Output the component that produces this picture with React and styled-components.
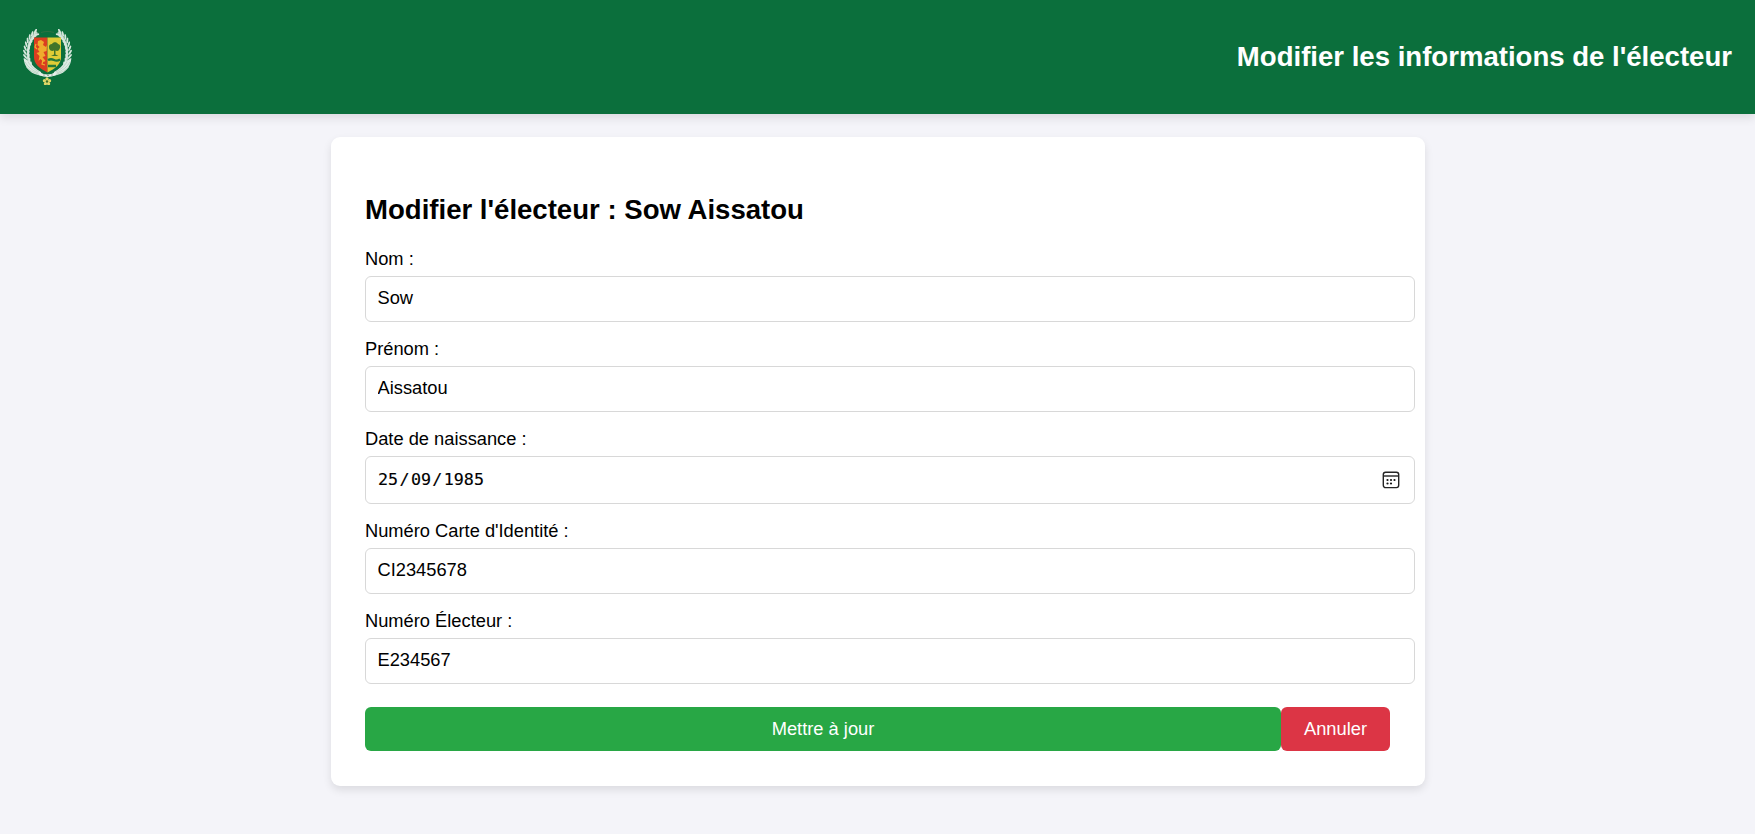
import React from 'react';
import styled, { createGlobalStyle } from 'styled-components';

const GlobalStyle = createGlobalStyle`
  * { box-sizing: border-box; }
  body {
    margin: 0;
    min-height: 100vh;
    background: #f4f4f9;
    color: #000;
    font-family: "Liberation Sans", Arial, sans-serif;
    font-size: 18.3px;
    overflow: hidden;
  }
`;

const Header = styled.header`
  display: flex;
  align-items: center;
  justify-content: space-between;
  height: 114px;
  padding: 0 23px;
  background: #0b6f3c;
  color: #fff;
  box-shadow: 0 4px 9px rgba(0, 0, 0, 0.1);
`;

const Logo = styled.svg`
  display: block;
  width: 49px;
  height: 56px;
`;

const HeaderTitle = styled.h1`
  margin: 0;
  font-size: 27.57px;
  line-height: 32px;
`;

const Card = styled.main`
  width: 1094px;
  height: 649px;
  margin: 23px 0 0 331px;
  padding: 57px 35px 34px 34px;
  background: #fff;
  border-radius: 9px;
  box-shadow: 0 4px 9px rgba(0, 0, 0, 0.1);
`;

const CardTitle = styled.h2`
  margin: 0 0 23px;
  font-size: 27.57px;
  line-height: 32px;
`;

const Form = styled.form`
  display: flex;
  flex-direction: column;
`;

const Field = styled.div`
  display: flex;
  flex-direction: column;
  width: 1050px;
  margin-bottom: 17px;
`;

const Label = styled.label`
  height: 21px;
  margin-bottom: 6px;
  line-height: 20px;
`;

const Input = styled.input`
  height: 46px;
  padding: 0 11.5px 2px;
  border: 1px solid #d8d8d8;
  border-radius: 6px;
  background: #fff;
  color: #000;
  font: inherit;
  outline: none;
`;

const DateBox = styled.div`
  display: flex;
  align-items: center;
  justify-content: space-between;
  height: 48px;
  padding: 0 14px 0 12px;
  border: 1px solid #d8d8d8;
  border-radius: 6px;
  background: #fff;
`;

const DateValue = styled.div`
  display: flex;
  padding-bottom: 2px;
  font-family: "DejaVu Sans Mono", monospace;
  font-size: 16.7px;
  -webkit-text-stroke: 0.15px #000;
`;

const Slash = styled.span`
  width: 12.8px;
  text-align: center;
`;

const Actions = styled.div`
  display: flex;
  margin-top: 6px;
`;

const Button = styled.button`
  flex: ${({ $grow }) => ($grow ? '1' : '0 0 109px')};
  height: 44px;
  padding: 0;
  border: 0;
  border-radius: 6px;
  background: ${({ $color }) => $color};
  color: #fff;
  font: inherit;
`;

const LEAVES = [
  [5, 35, -25], [3.5, 31, -20], [2.800, 27, -14], [2.600, 23, -8], [3, 19, 0],
  [4, 15, 8], [5.500, 11.500, 18], [7.500, 8, 28], [10, 5, 38], [13, 2.800, 52],
];

const Branch = () => (
  <g>
    <path d="M11 43C5 36 4 29 5 21C6 13 9 7 14 3" fill="none" stroke="#bcd5c5" strokeWidth="2.200" />
    {LEAVES.map(([x, y, angle]) => (
      <g key={y} transform={`translate(${x} ${y}) rotate(${angle})`} fill="#d7e7dd">
        <ellipse cx="-.8" rx="1" ry="3" transform="rotate(-24)" />
        <ellipse cx="2.800" rx="1.100" ry="2.800" transform="rotate(26)" />
      </g>
    ))}
    <path d="M.7 29C1 37 6 44 15 46L19 47L18 43C13 40 9 37 7 32L5 33L4 30L3 32Z" fill="#dfebe4" />
    <path d="M2 33Q6 40 15 44M5 33Q8 39 16 43M3 38Q8 43 16 45.500" fill="none" stroke="#a9c9b5" strokeWidth=".6" />
  </g>
);

const CoatOfArms = () => (
  <Logo viewBox="0 0 49 56" aria-label="Armoiries du Sénégal">
    <path d="M18 3.500Q24.500 1.500 31 3.500" fill="none" stroke="#2c7142" strokeWidth="1.100" />
    <Branch />
    <g transform="translate(49 0) scale(-1 1)"><Branch /></g>
    <path d="M11 8.500H24.500V43.500C16 39 11 35 11 28Z" fill="#db3d20" />
    <path d="M24.500 8.500H38V28C38 35 33 39 24.500 43.500Z" fill="#dfcc36" />
    <path d="M15 12l3-1 3 2-1 3 3 2 1-2-.5 6-3 1 2 4-3 1 3 4-2 1-3-3-2 2 1-5-3-3 3-1-2-3 2-2-2-2z" fill="#efab2d" />
    <path d="M13 15l-1 3 2 2M20 31l-1 4 3 1" fill="none" stroke="#efab2d" strokeWidth="1.200" />
    <path d="M26 19c-.5-3 1-4 3-4 1-2.500 5-2.500 6 0 2 0 3 3 1.500 5-.5 2-2.500 2.500-4 1.500v4l3 1.500H28l3-1.500v-4c-2 1-4.500 0-5-2.500z" fill="#42752a" />
    <path d="M25 31q3-1.500 6 0t6-.5M25 37h8" fill="none" stroke="#24783a" strokeWidth="2.300" />
    <path d="M17 43.500Q24.500 47.500 32 43.500L33 46Q24.500 50 16 46Z" fill="#e8f0eb" />
    <path d="M20 46h2m2 .5h2m2-.5h2" stroke="#79917f" strokeWidth=".7" />
    <g transform="translate(24 52.500)">
      <g fill="#dfd768">
        <circle cx="0" cy="-2.700" r="1.600" /><circle cx="2.600" cy="-.8" r="1.600" />
        <circle cx="1.600" cy="2.200" r="1.600" /><circle cx="-1.600" cy="2.200" r="1.600" />
        <circle cx="-2.600" cy="-.8" r="1.600" /><circle r="2.200" />
      </g>
      <circle r="1.200" fill="#3a6f29" />
    </g>
  </Logo>
);

const CalendarIcon = () => (
  <svg width="18" height="18" viewBox="0 0 18 18" aria-hidden="true">
    <rect x="1.300" y="1.200" width="15.400" height="15.400" rx="2.300" fill="none" stroke="#252525" strokeWidth="1.400" />
    <path d="M1.500 5H16.500" stroke="#252525" strokeWidth="1.400" />
    <g fill="#151515">
      <circle cx="5.500" cy="9" r="1.100" /><circle cx="9" cy="9" r="1.100" /><circle cx="12.500" cy="9" r="1.100" />
      <circle cx="5.500" cy="12.500" r="1.100" /><circle cx="9" cy="12.500" r="1.100" />
    </g>
  </svg>
);

const TextField = ({ id, label, value }) => (
  <Field>
    <Label htmlFor={id}>{label}</Label>
    <Input id={id} defaultValue={value} />
  </Field>
);

export default function App() {
  return (
    <>
      <GlobalStyle />
      <Header>
        <CoatOfArms />
        <HeaderTitle>Modifier les informations de l'électeur</HeaderTitle>
      </Header>
      <Card>
        <CardTitle>Modifier l'électeur : Sow Aissatou</CardTitle>
        <Form onSubmit={(event) => event.preventDefault()}>
          <TextField id="nom" label="Nom :" value="Sow" />
          <TextField id="prenom" label="Prénom :" value="Aissatou" />
          <Field>
            <Label>Date de naissance :</Label>
            <DateBox>
              <DateValue>
                <span>25</span><Slash>/</Slash><span>09</span><Slash>/</Slash><span>1985</span>
              </DateValue>
              <CalendarIcon />
            </DateBox>
          </Field>
          <TextField id="carte" label="Numéro Carte d'Identité :" value="CI2345678" />
          <TextField id="numero" label="Numéro Électeur :" value="E234567" />
          <Actions>
            <Button $grow $color="#28a745" type="submit">Mettre à jour</Button>
            <Button $color="#dc3545" type="button">Annuler</Button>
          </Actions>
        </Form>
      </Card>
    </>
  );
}
